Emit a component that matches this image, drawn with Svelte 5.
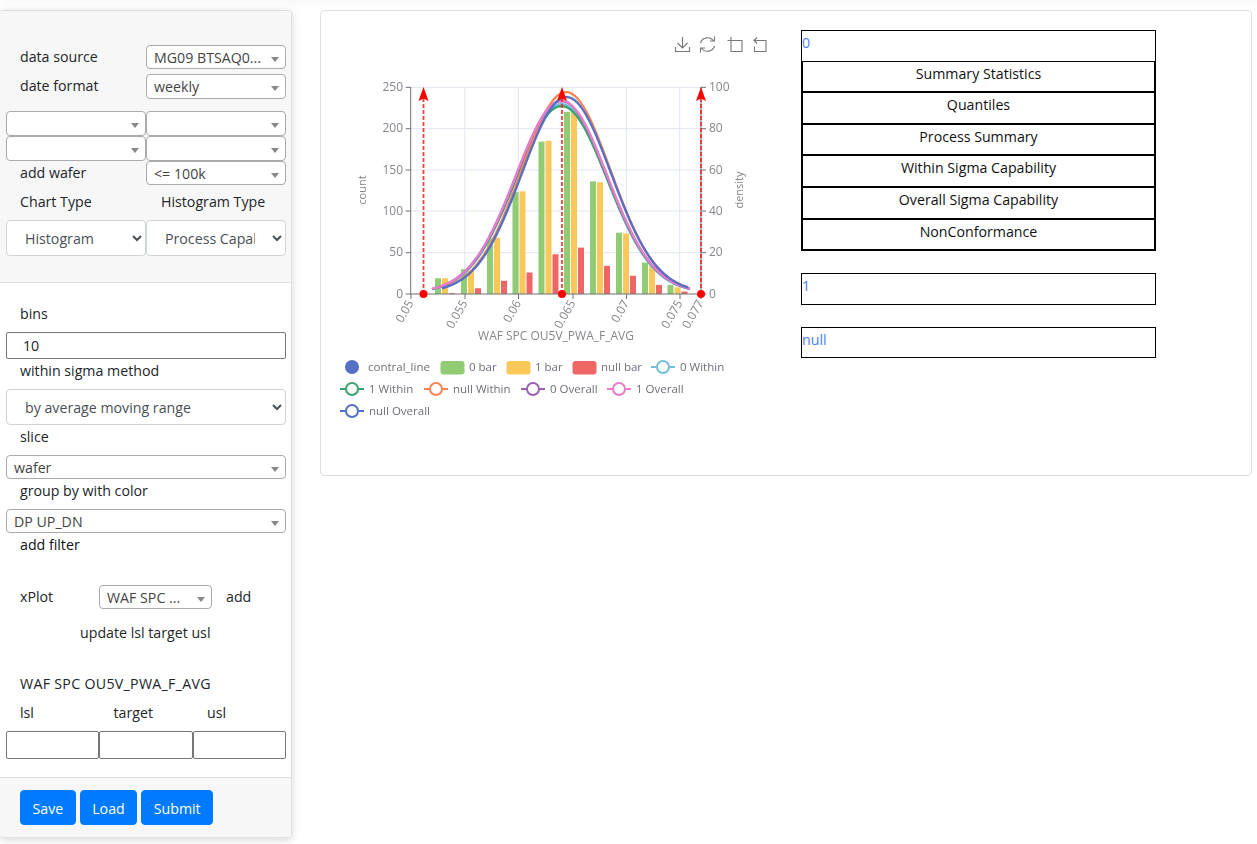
<script>
  const pxPerCount = 0.828, base = 294;
  const groups = [
    [435, 19, 19, 1], [461, 30, 28, 7], [487, 67, 68, 16], [512.5, 123, 124, 26], [538.5, 184, 185, 48],
    [564, 220, 220, 56], [590, 136, 135, 34], [616, 74, 73, 22], [642, 38, 33, 11], [667.5, 11, 8, 3]
  ];
  const barColors = ['#91cc75', '#fac858', '#ee6666'];
  const bars = groups.flatMap((g) => [0, 1, 2].map((i) => ({
    x: g[0] + i * 7, h: g[i + 1] * pxPerCount, c: barColors[i]
  })));
  const curve = (A, mu, s, from, to) => {
    const pts = [];
    for (let x = from; x <= to; x += 3) {
      const main = (A - 5) * Math.exp(-((x - mu) ** 2) / (2 * s * s));
      const tail = 5 * Math.exp(-((x - mu) ** 2) / (2 * 8000));
      pts.push(`${x},${(base - main - tail).toFixed(1)}`);
    }
    return 'M' + pts.join('L');
  };
  const curves = [
    { c: '#73c0de', d: curve(190, 561.5, 45, 432, 690) },
    { c: '#3ba272', d: curve(188, 561.5, 45.5, 432, 690) },
    { c: '#fc8452', d: curve(202, 566, 44.5, 442, 690) },
    { c: '#9a60b4', d: curve(193, 561.5, 45.5, 432, 690) },
    { c: '#ea7ccc', d: curve(193.5, 561.5, 45.5, 432, 690) },
    { c: '#5470c6', d: curve(197, 566.5, 44.5, 442, 690) }
  ];
  const vgrid = [464.7, 518.3, 572.7, 626.3, 679.7];
  const hgrid = [87.3, 128.7, 170, 211, 252.7];
  const yL = [[250, 87.3], [200, 128.7], [150, 170], [100, 211], [50, 252.7], [0, 294]];
  const yR = [[100, 87.3], [80, 128.7], [60, 170], [40, 211], [20, 252.7], [0, 294]];
  const xTicks = [['0.05', 411], ['0.055', 465], ['0.06', 518.5], ['0.065', 573], ['0.07', 626.5], ['0.075', 680], ['0.077', 701]];
  const arrows = [423.5, 562, 701];
  const legendRects = [[440.5, '#91cc75', '0 bar', 469], [506.5, '#fac858', '1 bar', 535], [572.5, '#ee6666', 'null bar', 601]];
  const legendLines = [
    [651, 367, '#73c0de', '0 Within'], [340, 389, '#3ba272', '1 Within'], [424, 389, '#fc8452', 'null Within'],
    [521, 389, '#9a60b4', '0 Overall'], [607, 389, '#ea7ccc', '1 Overall'], [340, 411, '#5470c6', 'null Overall']
  ];
  const tables = [
    { title: '0', rows: ['Summary Statistics', 'Quantiles', 'Process Summary', 'Within Sigma Capability', 'Overall Sigma Capability', 'NonConformance'] },
    { title: '1', rows: [] },
    { title: 'null', rows: [] }
  ];
</script>

<div class="topshade"></div>
<div class="page">
  <aside class="side">
    <section class="head">
      <div class="row r1">
        <span class="lab">data source</span>
        <div class="dd"><span>MG09 BTSAQ0...</span><i></i></div>
      </div>
      <div class="row r2">
        <span class="lab up">date format</span>
        <div class="dd"><span>weekly</span><i></i></div>
      </div>
      <div class="row r3">
        <div class="dd"><span></span><i></i></div>
        <div class="dd"><span></span><i></i></div>
      </div>
      <div class="row r4">
        <div class="dd"><span></span><i></i></div>
        <div class="dd"><span></span><i></i></div>
      </div>
      <div class="row r5">
        <span class="lab">add wafer</span>
        <div class="dd"><span>&lt;= 100k</span><i></i></div>
      </div>
      <div class="row r6">
        <span class="lab up">Chart Type</span>
        <span class="lab lab2 up">Histogram Type</span>
      </div>
      <div class="row r7">
        <select class="native"><option>Histogram</option></select>
        <select class="native"><option>Process Capability</option></select>
      </div>
    </section>

    <section class="body">
      <div class="lab line bins">bins</div>
      <input class="txt binsin" value="10" />
      <div class="lab line">within sigma method</div>
      <select class="native full"><option>by average moving range</option></select>
      <div class="lab line">slice</div>
      <div class="dd wide"><span>wafer</span><i></i></div>
      <div class="lab line">group by with color</div>
      <div class="dd wide"><span>DP UP_DN</span><i></i></div>
      <div class="lab line dark">add filter</div>
      <div class="xplot">
        <span class="lab xl">xPlot</span>
        <div class="dd xdd"><span>WAF SPC ...</span><i></i></div>
        <span class="add">add</span>
      </div>
      <div class="update">update lsl target usl</div>
      <div class="lab line waf">WAF SPC OU5V_PWA_F_AVG</div>
      <div class="triolab"><span>lsl</span><span>target</span><span>usl</span></div>
      <div class="trio"><input class="txt" /><input class="txt" /><input class="txt" /></div>
    </section>

    <footer class="foot">
      <button>Save</button><button>Load</button><button>Submit</button>
    </footer>
  </aside>

  <main class="card">
    <svg class="chart" width="460" height="460" viewBox="321 11 460 460">
      <g class="tool" fill="none" stroke="#777" stroke-width="1.1">
        <path d="M682.500 37v11M677.500 43l5 5 5-5M675.500 47v4.500h14V47" />
        <path d="M713.500 40.500a7.500 7.500 0 0 0-13 2.500M701.500 48.500a7.500 7.500 0 0 0 13-2.500M714.500 36.500v4.500h-4.500M700.500 52.500V48h4.500" />
        <path d="M731 37v14.500h11v-11h-14.500" />
        <path d="M757 37.500l-3 3 3 3M754 40.500h12v11h-11.500v-5" />
      </g>

      {#each hgrid as y}<line x1="410.700" x2="701" y1={y} y2={y} stroke="#e0e6f1" />{/each}
      {#each vgrid as x}<line x1={x} x2={x} y1="87" y2="294" stroke="#e0e6f1" />{/each}

      {#each bars as b}<rect x={b.x} y={294 - b.h} width="6" height={b.h} fill={b.c} />{/each}

      <line x1="410.700" x2="410.700" y1="87" y2="294" stroke="#6e7079" />
      <line x1="701" x2="701" y1="87" y2="294" stroke="#6e7079" />
      <line x1="410" x2="702" y1="294" y2="294" stroke="#6e7079" />
      {#each yL as t}<line x1="405.700" x2="410.700" y1={t[1]} y2={t[1]} stroke="#6e7079" />{/each}
      {#each yR as t}<line x1="701" x2="706" y1={t[1]} y2={t[1]} stroke="#6e7079" />{/each}
      {#each xTicks as t}<line x1={t[1]} x2={t[1]} y1="294" y2="299" stroke="#6e7079" />{/each}

      {#each curves as c}<path d={c.d} fill="none" stroke={c.c} stroke-width="2.300" />{/each}

      {#each arrows as x}
        <line x1={x} x2={x} y1="98" y2="294" stroke="#ff1a1a" stroke-width="1.800" stroke-opacity="0.85" stroke-dasharray="4 2" />
        <path d="M{x} 87l5 14l-5-2.500l-5 2.500z" fill="#f00" />
        <circle cx={x} cy="294" r="4" fill="#f00" />
      {/each}

      <g class="ax">
        {#each yL as t}<text x="403" y={t[1] + 3.5} text-anchor="end">{t[0]}</text>{/each}
        {#each yR as t}<text x="709" y={t[1] + 3.5}>{t[0]}</text>{/each}
        {#each xTicks as t}
          <text transform="translate({t[1] + 3} 303) rotate(-60)" text-anchor="end">{t[0]}</text>
        {/each}
        <text x="556" y="340" text-anchor="middle">WAF SPC OU5V_PWA_F_AVG</text>
        <text transform="translate(366 190) rotate(-90)" text-anchor="middle" class="sm">count</text>
        <text transform="translate(743 190) rotate(-90)" text-anchor="middle" class="sm">density</text>
      </g>

      <g class="leg">
        <circle cx="352" cy="367" r="7" fill="#5470c6" />
        <text x="368" y="371">contral_line</text>
        {#each legendRects as l}
          <rect x={l[0]} y="361" width="24" height="13.500" rx="3" fill={l[1]} />
          <text x={l[3]} y="371">{l[2]}</text>
        {/each}
        {#each legendLines as l}
          <line x1={l[0]} x2={l[0] + 24} y1={l[1]} y2={l[1]} stroke={l[2]} stroke-width="2" />
          <circle cx={l[0] + 12} cy={l[1]} r="6" fill="#fff" stroke={l[2]} stroke-width="2" />
          <text x={l[0] + 29} y={l[1] + 4}>{l[3]}</text>
        {/each}
      </g>
    </svg>

    <div class="tables">
      {#each tables as t}
        <div class="tbox">
          <a href="#t" class="ttl">{t.title}</a>
          {#each t.rows as r}<div class="trow">{r}</div>{/each}
        </div>
      {/each}
    </div>
  </main>
</div>

<style>
  :global(body) {
    margin: 0;
    background: #fff;
    color: #212529;
    font-family: "Open Sans", "Noto Sans", sans-serif;
    font-size: 14.2px;
  }
  .topshade {
    height: 1px;
    margin-top: -1px;
    box-shadow: 0 0 8px rgba(0, 0, 0, 0.25);
  }
  .page {
    display: flex;
    align-items: flex-start;
    gap: 28px;
    padding: 10px 5px 6px 0;
    box-sizing: border-box;
    height: 844px;
    overflow: hidden;
  }
  .side {
    width: 292px;
    flex: none;
    height: 828px;
    box-sizing: border-box;
    border: 1px solid #dfdfdf;
    border-left: 0;
    border-radius: 4px;
    box-shadow: 0 2px 8px rgba(0, 0, 0, 0.16);
    display: flex;
    flex-direction: column;
    overflow: hidden;
    background: #fff;
  }
  .head {
    height: 272px;
    flex: none;
    box-sizing: border-box;
    background: #f7f7f7;
    border-bottom: 1px solid #dfdfdf;
    padding: 34px 5px 0 6px;
  }
  .row {
    display: grid;
    grid-template-columns: 140px 140px;
    align-items: center;
  }
  .r1 { height: 24px; }
  .r2 { height: 25px; margin-top: 5px; }
  .r3 { height: 25px; margin-top: 12px; }
  .r4 { height: 25px; }
  .r5 { height: 24px; }
  .r6 { height: 35px; }
  .r7 { height: 36px; }
  .r3 .dd, .r4 .dd { height: 25px; }
  .r2 .dd { height: 25px; }
  .lab {
    padding-left: 14px;
    line-height: 20px;
    color: #212529;
  }
  .lab.up { margin-bottom: 2px; }
  .lab2 { padding-left: 15px; }
  .dd {
    position: relative;
    box-sizing: border-box;
    height: 24px;
    background: #fff;
    border: 1px solid #aaa;
    border-radius: 4px;
    padding: 0 22px 0 7px;
    line-height: 24px;
    color: #444;
    white-space: nowrap;
    overflow: hidden;
  }
  .dd i {
    position: absolute;
    right: 6px;
    top: 11px;
    width: 0;
    height: 0;
    border: 4px solid transparent;
    border-top: 5px solid #888;
    border-bottom: 0;
  }
  .native {
    box-sizing: border-box;
    width: 140px;
    height: 36px;
    background: #fff;
    border: 1px solid #ced4da;
    border-radius: 4px;
    padding: 0 14px;
    color: #495057;
    font: inherit;
  }
  .native.full { width: 280px; display: block; }
  .body {
    flex: 1;
    padding: 0 5px 0 6px;
  }
  .line { height: 20px; }
  .bins { margin-top: 21px; }
  .txt {
    box-sizing: border-box;
    display: block;
    width: 100%;
    height: 27px;
    border: 1px solid #767676;
    border-radius: 2px;
    background: #fff;
    padding: 1px 2px;
    font: inherit;
    color: #212529;
  }
  .binsin { margin-top: 8px; padding-left: 16px; margin-bottom: 2px; }
  .native.full { margin-top: 8px; margin-bottom: 2px; }
  .dd.wide { margin-top: 8px; margin-bottom: 2px; }
  .dark { color: #111; }
  .xplot {
    display: flex;
    align-items: center;
    margin-top: 30px;
    height: 24px;
  }
  .xl { width: 93px; flex: none; box-sizing: border-box; padding-left: 14px; }
  .xdd { width: 113px; flex: none; }
  .add { margin: 0 0 2px 14px; }
  .update {
    margin: 14px 0 0 74px;
    line-height: 20px;
  }
  .waf { margin-top: 31px; letter-spacing: 0.3px; }
  .triolab {
    display: grid;
    grid-template-columns: 93.500px 93.500px 93px;
    margin-top: 9px;
    line-height: 20px;
    padding-left: 14px;
  }
  .trio {
    display: grid;
    grid-template-columns: 93px 94px 93px;
    margin-top: 8px;
  }
  .trio .txt { height: 28px; }
  .foot {
    flex: none;
    height: 60px;
    box-sizing: border-box;
    background: #f7f7f7;
    border-top: 1px solid #dfdfdf;
    padding: 12px 0 0 20px;
    display: flex;
    align-items: flex-start;
    gap: 4px;
  }
  button {
    height: 35px;
    background: #007bff;
    color: #fff;
    border: 1px solid #007bff;
    border-radius: 4px;
    padding: 1px 11.500px 0;
    font: inherit;
  }
  .card {
    flex: 1;
    height: 466px;
    box-sizing: border-box;
    border: 1px solid #dfdfdf;
    border-radius: 4px;
    display: flex;
    align-items: flex-start;
    background: #fff;
  }
  .chart { flex: none; display: block; filter: blur(0.3px); }
  .ax text { font-size: 12px; fill: #85868e; }
  .ax text.sm { font-size: 11px; }
  .leg text { font-size: 11.500px; fill: #6e7079; }
  .tables {
    margin: 19px 0 0 20px;
    width: 355px;
  }
  .tbox {
    box-sizing: border-box;
    border: 1px solid #000;
    margin-bottom: 22px;
    min-height: 31px;
  }
  .ttl {
    display: block;
    height: 29.500px;
    line-height: 24px;
    color: #4c7dff;
    text-decoration: none;
  }
  .tbox:nth-child(3) { margin-bottom: 0; }
  .trow {
    box-sizing: border-box;
    height: 31.670px;
    border: 1px solid #000;
    text-align: center;
    line-height: 24px;
    color: #111;
  }
</style>
